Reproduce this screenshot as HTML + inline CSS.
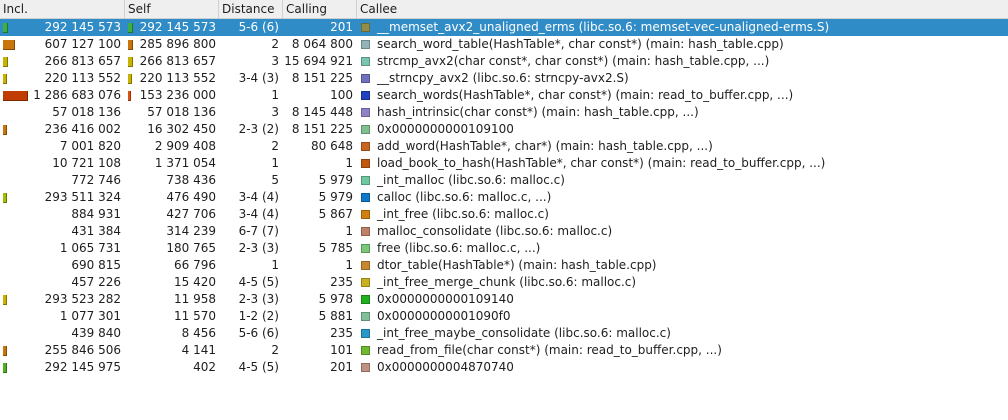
<!DOCTYPE html><html><head><style>
body{margin:0;width:1008px;height:420px;background:#fff;font-family:"DejaVu Sans",sans-serif;font-size:12px;color:#1e1e1e;overflow:hidden;position:relative}
.hdr{position:absolute;top:0;left:0;width:1008px;height:18px;background:#efefef;border-bottom:1px solid #d0d0d0}
.hdr div{position:absolute;top:0;height:18px;line-height:18px;padding-left:3px;border-right:1px solid #d0d0d0;box-sizing:border-box}
.row{position:absolute;left:0;width:1008px;height:17px;line-height:17px}
.sel{background:#308cc6;color:#fff}
.c{position:absolute;top:0;white-space:nowrap}
.r{text-align:right}
.bar{position:absolute;top:4px;height:10px;box-shadow:inset -1px -1px 0 rgba(0,0,0,.35)}
.ic{position:absolute;left:361px;top:4px;width:9px;height:9px;box-shadow:inset 0 0 0 1px rgba(0,0,0,.25)}
</style></head><body>
<div class="hdr">
<div style="left:0;width:125px">Incl.</div>
<div style="left:125px;width:94px">Self</div>
<div style="left:219px;width:64px">Distance</div>
<div style="left:283px;width:74px">Calling</div>
<div style="left:357px;width:651px;border:none">Callee</div>
</div>
<div id="rows"></div>
<script>
var d=[
["292 145 573",5,"#3cb043","292 145 573",5,"#3cb043","5-6 (6)","201","#8f8f4a","__memset_avx2_unaligned_erms (libc.so.6: memset-vec-unaligned-erms.S)"],
["607 127 100",12,"#c8760c","285 896 800",5,"#c8760c","2","8 064 800","#92b4b8","search_word_table(HashTable*, char const*) (main: hash_table.cpp)"],
["266 813 657",5,"#c8b400","266 813 657",5,"#c8b400","3","15 694 921","#78c4b0","strcmp_avx2(char const*, char const*) (main: hash_table.cpp, ...)"],
["220 113 552",4,"#c8b400","220 113 552",4,"#c8b400","3-4 (3)","8 151 225","#7070c0","__strncpy_avx2 (libc.so.6: strncpy-avx2.S)"],
["1 286 683 076",25,"#c03c00","153 236 000",3,"#e05010","1","100","#2040c0","search_words(HashTable*, char const*) (main: read_to_buffer.cpp, ...)"],
["57 018 136",0,"","57 018 136",0,"","3","8 145 448","#9080c8","hash_intrinsic(char const*) (main: hash_table.cpp, ...)"],
["236 416 002",4,"#c8760c","16 302 450",0,"","2-3 (2)","8 151 225","#80c090","0x0000000000109100"],
["7 001 820",0,"","2 909 408",0,"","2","80 648","#c86420","add_word(HashTable*, char*) (main: hash_table.cpp, ...)"],
["10 721 108",0,"","1 371 054",0,"","1","1","#c05810","load_book_to_hash(HashTable*, char const*) (main: read_to_buffer.cpp, ...)"],
["772 746",0,"","738 436",0,"","5","5 979","#70c8a0","_int_malloc (libc.so.6: malloc.c)"],
["293 511 324",4,"#a0c000","476 490",0,"","3-4 (4)","5 979","#1078c8","calloc (libc.so.6: malloc.c, ...)"],
["884 931",0,"","427 706",0,"","3-4 (4)","5 867","#d08010","_int_free (libc.so.6: malloc.c)"],
["431 384",0,"","314 239",0,"","6-7 (7)","1","#c08068","malloc_consolidate (libc.so.6: malloc.c)"],
["1 065 731",0,"","180 765",0,"","2-3 (3)","5 785","#78c878","free (libc.so.6: malloc.c, ...)"],
["690 815",0,"","66 796",0,"","1","1","#c88830","dtor_table(HashTable*) (main: hash_table.cpp)"],
["457 226",0,"","15 420",0,"","4-5 (5)","235","#c8b020","_int_free_merge_chunk (libc.so.6: malloc.c)"],
["293 523 282",4,"#c8b400","11 958",0,"","2-3 (3)","5 978","#20b020","0x0000000000109140"],
["1 077 301",0,"","11 570",0,"","1-2 (2)","5 881","#80c098","0x00000000001090f0"],
["439 840",0,"","8 456",0,"","5-6 (6)","235","#2898c8","_int_free_maybe_consolidate (libc.so.6: malloc.c)"],
["255 846 506",4,"#c8760c","4 141",0,"","2","101","#70b830","read_from_file(char const*) (main: read_to_buffer.cpp, ...)"],
["292 145 975",4,"#50b020","402",0,"","4-5 (5)","201","#c09080","0x0000000004870740"]];
var h="";
d.forEach(function(r,i){
h+='<div class="row'+(i==0?' sel':'')+'" style="top:'+(19+i*17)+'px">';
if(r[1])h+='<div class="bar" style="left:3px;width:'+r[1]+'px;background:'+r[2]+'"></div>';
h+='<div class="c r" style="left:0;width:121px">'+r[0]+'</div>';
if(r[4])h+='<div class="bar" style="left:128px;width:'+r[4]+'px;background:'+r[5]+'"></div>';
h+='<div class="c r" style="left:125px;width:91px">'+r[3]+'</div>';
h+='<div class="c r" style="left:219px;width:60px">'+r[6]+'</div>';
h+='<div class="c r" style="left:283px;width:70px">'+r[7]+'</div>';
h+='<div class="ic" style="background:'+r[8]+'"></div>';
h+='<div class="c" style="left:377px">'+r[9]+'</div></div>';
});
document.getElementById("rows").innerHTML=h;
</script>
</body></html>
